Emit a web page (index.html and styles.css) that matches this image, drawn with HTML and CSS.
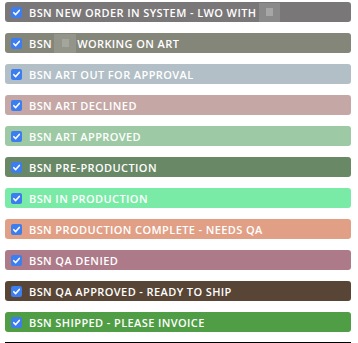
FILE: index.html
```html
<!DOCTYPE html>
<html>
<head>
<meta charset="utf-8">
<link rel="stylesheet" href="styles.css">
</head>
<body>
<div class="list">
  <div class="row c1"><span class="cb"><svg viewBox="0 0 11 11"><path d="M2.8 5.7 L4.7 7.6 L8.3 3.4" /></svg></span><span class="label">BSN NEW ORDER IN SYSTEM - LWO WITH</span><span class="redact r1"><span class="in"></span></span></div>
  <div class="row c2"><span class="cb"><svg viewBox="0 0 11 11"><path d="M2.8 5.7 L4.7 7.6 L8.3 3.4" /></svg></span><span class="label">BSN</span><span class="redact r2"><span class="in"></span></span><span class="label">WORKING ON ART</span></div>
  <div class="row c3"><span class="cb"><svg viewBox="0 0 11 11"><path d="M2.8 5.7 L4.7 7.6 L8.3 3.4" /></svg></span><span class="label">BSN ART OUT FOR APPROVAL</span></div>
  <div class="row c4"><span class="cb"><svg viewBox="0 0 11 11"><path d="M2.8 5.7 L4.7 7.6 L8.3 3.4" /></svg></span><span class="label">BSN ART DECLINED</span></div>
  <div class="row c5"><span class="cb"><svg viewBox="0 0 11 11"><path d="M2.8 5.7 L4.7 7.6 L8.3 3.4" /></svg></span><span class="label">BSN ART APPROVED</span></div>
  <div class="row c6"><span class="cb"><svg viewBox="0 0 11 11"><path d="M2.8 5.7 L4.7 7.6 L8.3 3.4" /></svg></span><span class="label">BSN PRE-PRODUCTION</span></div>
  <div class="row c7"><span class="cb"><svg viewBox="0 0 11 11"><path d="M2.8 5.7 L4.7 7.6 L8.3 3.4" /></svg></span><span class="label">BSN IN PRODUCTION</span></div>
  <div class="row c8"><span class="cb"><svg viewBox="0 0 11 11"><path d="M2.8 5.7 L4.7 7.6 L8.3 3.4" /></svg></span><span class="label">BSN PRODUCTION COMPLETE - NEEDS QA</span></div>
  <div class="row c9"><span class="cb"><svg viewBox="0 0 11 11"><path d="M2.8 5.7 L4.7 7.6 L8.3 3.4" /></svg></span><span class="label">BSN QA DENIED</span></div>
  <div class="row c10"><span class="cb"><svg viewBox="0 0 11 11"><path d="M2.8 5.7 L4.7 7.6 L8.3 3.4" /></svg></span><span class="label">BSN QA APPROVED - READY TO SHIP</span></div>
  <div class="row c11"><span class="cb"><svg viewBox="0 0 11 11"><path d="M2.8 5.7 L4.7 7.6 L8.3 3.4" /></svg></span><span class="label">BSN SHIPPED - PLEASE INVOICE</span></div>
  <div class="rule"></div>
</div>
</body>
</html>
```
FILE: styles.css
```css
html, body {
  margin: 0;
  padding: 0;
  background: #ffffff;
}
.list {
  display: flex;
  flex-direction: column;
  gap: 11px;
  padding: 2px 7px 0 5px;
  font-family: "Open Sans", "Liberation Sans", sans-serif;
}
.row {
  display: flex;
  align-items: center;
  height: 20px;
  border-radius: 3px;
  padding-left: 6px;
  color: #ffffff;
  font-size: 11px;
  font-weight: 600;
  white-space: nowrap;
}
.cb {
  display: flex;
  width: 11px;
  height: 11px;
  border-radius: 2px;
  background: #3c7ef0;
  margin-right: 7px;
  flex: none;
}
.cb svg {
  width: 11px;
  height: 11px;
}
.cb path {
  fill: none;
  stroke: #ffffff;
  stroke-width: 1.6;
  stroke-linecap: round;
  stroke-linejoin: round;
}
.label {
  letter-spacing: 0.4px;
}
.redact {
  display: flex;
  align-items: center;
  justify-content: center;
  height: 19px;
}
.redact .in {
  display: block;
  width: 7px;
  height: 8px;
}
.r1 {
  width: 21px;
  margin-left: 3px;
  background: #8b8a8b;
}
.r1 .in { background: #a6a6a6; }
.r2 {
  width: 22px;
  margin: 0 1px 0 2px;
  background: #93948a;
}
.r2 .in { background: #a4a59b; }
.c1 { background: #7a7778; }
.c2 { background: #85867a; }
.c3 { background: #b2bfc7; }
.c4 { background: #c5a8a6; }
.c5 { background: #9dc9a4; }
.c6 { background: #688866; }
.c7 { background: #7aeba6; }
.c8 { background: #e1a085; }
.c9 { background: #ac7a88; }
.c10 { background: #584535; }
.c11 { background: #4f9d45; }
.rule {
  height: 2px;
  background: #000000;
  margin-top: -1px;
}
```
